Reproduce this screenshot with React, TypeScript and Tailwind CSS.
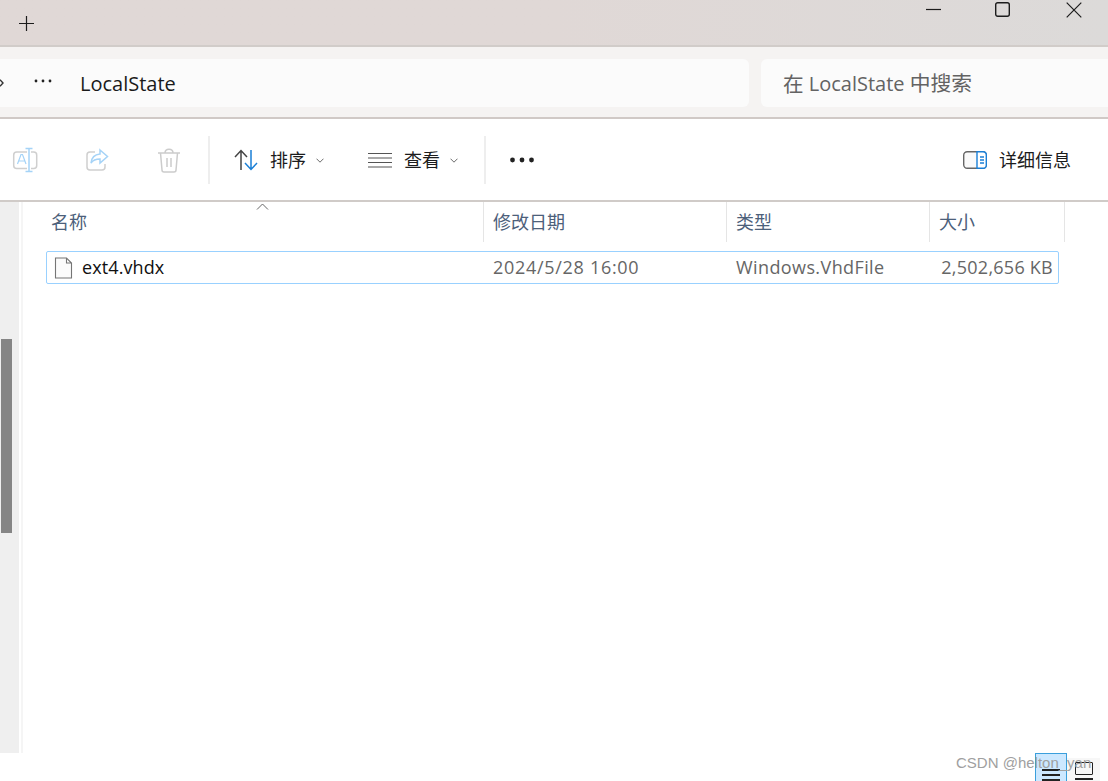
const font = "font-['Open_Sans','Noto_Sans_CJK_SC',sans-serif]";

function Caret() {
  return (
    <svg width="8" height="5" viewBox="0 0 8 5" fill="none" stroke="#6b6b6b" strokeWidth="1">
      <path d="M.5 .7 4 4.200 7.500 .7" />
    </svg>
  );
}

function Sep() {
  return <div className="w-[2px] h-12 bg-[#eeeeee]" />;
}

function HeaderCell({ w, label, pl }: { w: string; label: string; pl: string }) {
  return (
    <div className={`${w} ${pl} h-[40px] border-r border-[#e5e5e5] flex items-center text-[18px] text-[#4c607a]`}>
      {label}
    </div>
  );
}

export default function App() {
  return (
    <div className={`${font} w-[1108px] h-[781px] overflow-hidden bg-white relative flex flex-col`}>
      <div className="h-[47px] shrink-0 bg-gradient-to-r from-[#e0d8d6] via-[#e0d8d6] to-[#dcdad9] border-b-2 border-[#d1ccc9] flex items-start justify-between">
        <svg className="mt-[16px] ml-[19px]" width="15" height="15" viewBox="0 0 15 15" stroke="#1c1c1c" strokeWidth="1.2">
          <path d="M7.500 0v15M0 7.500h15" />
        </svg>
        <div className="flex items-start">
          <svg width="15" height="4" viewBox="0 0 15 4" className="mt-[8px] mr-[54px]" stroke="#1c1c1c" strokeWidth="1.2">
            <path d="M0 1.500h15" />
          </svg>
          <svg width="15" height="15" viewBox="0 0 15 15" fill="none" className="mt-[2px] mr-[56px]" stroke="#1c1c1c" strokeWidth="1.4">
            <rect x=".7" y=".7" width="13.600" height="13.600" rx="2" />
          </svg>
          <svg width="16" height="16" viewBox="0 0 16 16" fill="none" className="mt-[2px] mr-[26px]" stroke="#1c1c1c" strokeWidth="1.2">
            <path d="M.7 .7l14.600 14.600M15.300 .7 .7 15.300" />
          </svg>
        </div>
      </div>

      <div className="h-[72px] shrink-0 bg-[#f5f3f2] border-b-2 border-[#d0c9c6] pt-[12px] flex items-start">
        <div className="w-[749px] h-[48px] bg-[#fbfbfb] rounded-r-md flex items-center relative">
          <svg width="4" height="8" viewBox="0 0 4 8" className="ml-0" fill="none" stroke="#333" strokeWidth="1.4">
            <path d="M0 .8 3 4 0 7.200" />
          </svg>
          <svg width="18" height="4" viewBox="0 0 18 4" className="ml-[30px] mb-[4px]" fill="#222">
            <circle cx="2" cy="2" r="1.400" /><circle cx="9" cy="2" r="1.400" /><circle cx="16" cy="2" r="1.400" />
          </svg>
          <span className="ml-[28px] mt-[2px] text-[20px] text-[#1a1a1a]">LocalState</span>
        </div>
        <div className="ml-[12px] w-[347px] h-[48px] bg-[#fbfbfb] rounded-l-md flex items-center pl-[22px] pt-[2px] text-[20px] text-[#636363] whitespace-pre">
          <span className="text-[20.600px]">在</span> LocalState <span className="text-[20.800px]">中搜索</span>
        </div>
      </div>

      <div className="h-[83px] shrink-0 bg-white border-b-2 border-[#d0cbc8] flex items-center pl-[12px] pt-[1px]">
        <svg width="26" height="26" viewBox="0 0 26 26" fill="none" strokeWidth="1.500">
          <rect x="1.700" y="5" width="23" height="16.500" rx="3" stroke="#cfcfcf" />
          <path d="M5.500 17 9 7.500h1.500L14 17M6.800 14h6" stroke="#a5d3f7" strokeWidth="1.200" />
          <path d="M17 1v24" stroke="#fff" strokeWidth="4" />
          <path d="M13.500 1.500h7M17 1.500v23M13.500 24.500h7" stroke="#a5d3f7" />
        </svg>
        <svg width="24" height="24" viewBox="0 0 24 24" fill="none" strokeWidth="1.500" className="ml-[47px]">
          <path d="M10 4H5a3 3 0 0 0-3 3v12a3 3 0 0 0 3 3h12a3 3 0 0 0 3-3v-3" stroke="#cfcfcf" />
          <path d="M15 2l7.500 6.500-7.500 6.500v-4c-4 0-7 1-9 4 .5-5 4-8.500 9-9z" stroke="#a5d3f7" />
        </svg>
        <svg width="24" height="25" viewBox="0 0 24 25" fill="none" stroke="#cccccc" strokeWidth="1.500" className="ml-[48px]">
          <path d="M1 5h22M8 5c0-5 8-5 8 0M3.500 5l1.500 17a2 2 0 0 0 2 2h10a2 2 0 0 0 2-2l1.500-17M10 10v9M14 10v9" />
        </svg>
        <div className="ml-[27px]"><Sep /></div>
        <svg width="26" height="22" viewBox="0 0 26 22" fill="none" strokeWidth="1.500" className="ml-[24px]">
          <path d="M7 21V1.500M1 8l6-6.500L13 8" stroke="#444" />
          <path d="M17 1v19M11 14l6 6.500 6-6.500" stroke="#1a7fd6" />
        </svg>
        <span className="ml-[10px] text-[18px] text-[#1c1c1c]">排序</span>
        <div className="ml-[10px]"><Caret /></div>
        <svg width="24" height="16" viewBox="0 0 24 16" stroke="#555" strokeWidth="1.200" className="ml-[44px]">
          <path d="M0 1.500h24M0 6h24M0 10.500h24M0 15h24" />
        </svg>
        <span className="ml-[12px] text-[18px] text-[#1c1c1c]">查看</span>
        <div className="ml-[10px]"><Caret /></div>
        <div className="ml-[26px]"><Sep /></div>
        <svg width="24" height="6" viewBox="0 0 24 6" fill="#222" className="ml-[24px]">
          <circle cx="2.500" cy="3" r="2.400" /><circle cx="12" cy="3" r="2.400" /><circle cx="21.500" cy="3" r="2.400" />
        </svg>
        <svg width="24" height="18" viewBox="0 0 24 18" fill="none" className="ml-[429px]" strokeWidth="1.400">
          <rect x=".7" y=".7" width="22.600" height="16.600" rx="3.500" stroke="#666" fill="#fafafa" />
          <path d="M14 .7h6a3.300 3.300 0 0 1 3.300 3.300v10a3.300 3.300 0 0 1-3.300 3.300h-6z" stroke="#1a7fd6" fill="#fff" />
          <path d="M17 6h4M17 9h4M17 12h4" stroke="#1a7fd6" />
        </svg>
        <span className="ml-[12px] text-[18px] text-[#1c1c1c]">详细信息</span>
      </div>

      <div className="flex-1 flex min-h-0">
        <div className="w-[23px] shrink-0 h-[551px] flex">
          <div className="w-[19px] bg-[#efefef] pt-[137px] pl-[1px]">
            <div className="w-[11px] h-[194px] bg-[#858585]" />
          </div>
          <div className="w-[2px]" />
          <div className="w-[2px] bg-[#f5f5f5]" />
        </div>
        <div className="flex-1 relative">
          <svg width="13" height="7" viewBox="0 0 13 7" fill="none" stroke="#666" className="absolute left-[233px] top-[1px]">
            <path d="M1 6.500 6.500 1 12 6.500" />
          </svg>
          <div className="flex pl-[18px]">
            <HeaderCell w="w-[443px]" pl="pl-[10px]" label="名称" />
            <HeaderCell w="w-[243px]" pl="pl-[9px]" label="修改日期" />
            <HeaderCell w="w-[203px]" pl="pl-[9px]" label="类型" />
            <HeaderCell w="w-[135px]" pl="pl-[9px]" label="大小" />
          </div>
          <div className="ml-[23px] mt-[9px] w-[1013px] h-[33px] border border-[#99d1ff] rounded-[2px] flex items-center text-[18px]">
            <div className="w-[437px] pl-[7px] flex items-center text-[#101010]">
              <svg width="20" height="22" viewBox="0 0 20 22" fill="#fbfbfb" stroke="#757575" strokeWidth="1.100">
                <path d="M1.500 1h11l5 5v15h-16zM12.500 1v5h5" />
              </svg>
              <span className="ml-[8px] tracking-[0.1px]">ext4.vhdx</span>
            </div>
            <div className="w-[243px] pl-[9px] text-[#666666] tracking-[0.7px]">2024/5/28 16:00</div>
            <div className="w-[203px] pl-[9px] text-[#666666] tracking-[0.4px]">Windows.VhdFile</div>
            <div className="flex-1 pr-[5px] text-right text-[#666666] whitespace-nowrap tracking-[0.25px]">2,502,656 KB</div>
          </div>
        </div>
      </div>

      <div className="absolute left-[1035px] top-[753px] w-[32px] h-[28px] bg-[#cce8ff] border border-[#3a9fdc] border-b-0 flex flex-col items-center gap-[3px] pt-[15px]">
        <div className="w-[18px] h-[2px] bg-[#222]" />
        <div className="w-[18px] h-[2px] bg-[#222]" />
        <div className="w-[18px] h-[2px] bg-[#222]" />
      </div>
      <div className="absolute left-[1067px] top-[758px] w-[33px] h-[23px] bg-[#f7f7f7] flex flex-col items-center pt-[4px] gap-[3px]">
        <div className="w-[18px] h-[13px] border-[1.5px] border-[#222] rounded-[1px]" />
        <div className="w-[18px] h-[2px] bg-[#222]" />
      </div>
      <div className="absolute left-[956px] top-[752px] text-[15px] text-[#a0a0a0] font-['Liberation_Sans',sans-serif] whitespace-nowrap">
        CSDN @helton_yan
      </div>
    </div>
  );
}
